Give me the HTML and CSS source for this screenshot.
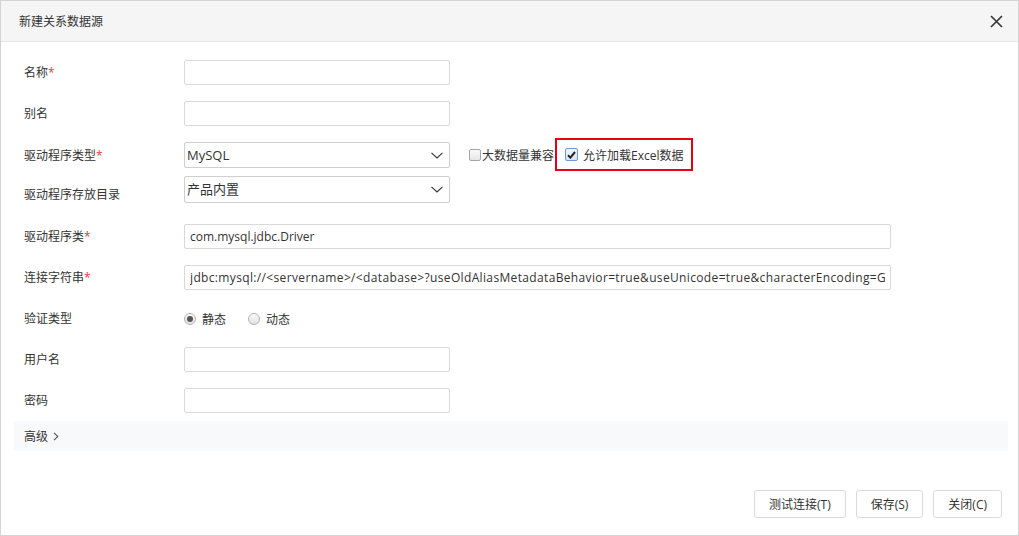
FILE: index.html
```html
<!DOCTYPE html>
<html>
  <head>
    <title>新建关系数据源</title>
    <link rel="stylesheet" href="styles.css">
  </head>
  <body>
    <div class="dialog">
      <div class="dialog-header">
        <span class="dialog-title">新建关系数据源</span>
        <svg class="close-icon" width="13" height="13" viewBox="0 0 13 13">
          <path d="M1 1L12 12M12 1L1 12" stroke="#333" stroke-width="1.6" fill="none" />
        </svg>
      </div>

      <div class="dialog-body">
        <div class="row">
          <label class="label">名称<span class="req">*</span></label>
          <input class="text-input short" type="text">
        </div>

        <div class="row">
          <label class="label">别名</label>
          <input class="text-input short" type="text">
        </div>

        <div class="row tight">
          <label class="label">驱动程序类型<span class="req">*</span></label>
          <div class="select">
            <span>MySQL</span>
            <svg class="chevron" width="12" height="7" viewBox="0 0 12 7">
              <path d="M0.5 0.8L6 6L11.5 0.8" stroke="#333" stroke-width="1.1" fill="none" />
            </svg>
          </div>
          <label class="check-option">
            <span class="checkbox"></span>大数据量兼容
          </label>
          <label class="check-option highlight">
            <span class="checkbox checked">
              <svg width="9" height="8" viewBox="0 0 9 8">
                <path d="M1 4.2L3.4 6.6L8 1" stroke="#222" stroke-width="2" fill="none" />
              </svg>
            </span>
            允许加载Excel数据
          </label>
        </div>

        <div class="row wide-gap">
          <label class="label low">驱动程序存放目录</label>
          <div class="select tall">
            <span class="select-cn">产品内置</span>
            <svg class="chevron" width="12" height="7" viewBox="0 0 12 7">
              <path d="M0.5 0.8L6 6L11.5 0.8" stroke="#333" stroke-width="1.1" fill="none" />
            </svg>
          </div>
        </div>

        <div class="row">
          <label class="label">驱动程序类<span class="req">*</span></label>
          <input class="text-input long" type="text" value="com.mysql.jdbc.Driver">
        </div>

        <div class="row">
          <label class="label">连接字符串<span class="req">*</span></label>
          <input class="text-input long conn" type="text"
            value="jdbc:mysql://<servername>/<database>?useOldAliasMetadataBehavior=true&useUnicode=true&characterEncoding=GBK">
        </div>

        <div class="row">
          <label class="label">验证类型</label>
          <div class="radio-group">
            <label class="radio-option"><span class="radio on"></span>静态</label>
            <label class="radio-option"><span class="radio"></span>动态</label>
          </div>
        </div>

        <div class="row">
          <label class="label">用户名</label>
          <input class="text-input short" type="text">
        </div>

        <div class="row last">
          <label class="label">密码</label>
          <input class="text-input short" type="password">
        </div>

        <div class="advanced-bar">
          高级
          <svg width="6" height="9" viewBox="0 0 6 9">
            <path d="M1 0.8L4.8 4.5L1 8.2" stroke="#555" stroke-width="1.1" fill="none" />
          </svg>
        </div>
      </div>

      <div class="dialog-footer">
        <button class="btn">测试连接(T)</button>
        <button class="btn">保存(S)</button>
        <button class="btn">关闭(C)</button>
      </div>
    </div>
  </body>
</html>
```

FILE: styles.css
```css
:root {
  --border-color: #d9d9d9;
  --text-color: #333;
  --header-bg: #f5f5f5;
  --bar-bg: #f8f9fb;
}

* {
  box-sizing: border-box;
}

body {
  margin: 0;
  font-family: "Open Sans", "Noto Sans CJK SC", sans-serif;
  font-size: 12px;
  color: var(--text-color);
  background: white;
}

.dialog {
  width: 1019px;
  height: 536px;
  border: 1px solid #d4d4d4;
  display: flex;
  flex-direction: column;
  background: white;
}

.dialog-header {
  height: 41px;
  background: var(--header-bg);
  border-bottom: 1px solid #e6e6e6;
  display: flex;
  align-items: center;
  justify-content: space-between;
  padding: 0 15px 0 18px;
}

.dialog-title {
  font-size: 12px;
}

.dialog-body {
  padding: 18px 10px 0 13px;
}

.row {
  display: flex;
  align-items: center;
  min-height: 25px;
  margin-bottom: 16px;
  padding-left: 10px;
}

.row.tight {
  margin-bottom: 8px;
}

.row.wide-gap {
  margin-bottom: 21px;
}

.row.last {
  margin-bottom: 8px;
}

.label {
  width: 160px;
  flex-shrink: 0;
  line-height: 17px;
}

.label.low {
  align-self: flex-end;
}

.req {
  color: #e53935;
}

.text-input {
  height: 25px;
  border: 1px solid var(--border-color);
  border-radius: 2px;
  padding: 0 5px;
  font-family: inherit;
  font-size: 12px;
  color: var(--text-color);
  outline: none;
}

.text-input.short {
  width: 266px;
}

.text-input.long {
  width: 707px;
}

.text-input.conn {
  letter-spacing: 0.35px;
}

.select {
  width: 266px;
  height: 26px;
  border: 1px solid #cfcfcf;
  border-radius: 2px;
  display: flex;
  align-items: center;
  justify-content: space-between;
  padding: 0 6px 0 2px;
  font-size: 13px;
}

.select.tall {
  height: 27px;
}

.select-cn {
  margin-top: -3px;
}

.check-option {
  display: flex;
  align-items: center;
  margin-left: 19px;
}

.check-option.highlight {
  margin: -4px 0 -3px 1px;
  border: 2px solid #e60012;
  height: 33px;
  padding: 0 8px 0 8px;
}

.checkbox {
  width: 12px;
  height: 12px;
  border: 1px solid #a6a6a6;
  border-radius: 2px;
  background: linear-gradient(#fafafa, #e6e6e6);
  display: inline-flex;
  align-items: center;
  justify-content: center;
  margin-right: 1px;
}

.checkbox.checked {
  width: 13px;
  height: 13px;
  border-color: #6d9ad8;
  background: linear-gradient(#f0f5fc, #d8e4f4);
  margin-right: 5px;
}

.radio-group {
  display: flex;
  gap: 22px;
}

.radio-option {
  display: flex;
  align-items: center;
  gap: 6px;
}

.radio {
  width: 12px;
  height: 12px;
  border-radius: 50%;
  border: 1px solid #b3b3b3;
  background: linear-gradient(#fafafa, #e2e2e2);
  display: inline-flex;
  align-items: center;
  justify-content: center;
}

.radio.on::after {
  content: "";
  width: 6px;
  height: 6px;
  border-radius: 50%;
  background: #555;
}

.advanced-bar {
  height: 30px;
  background: var(--bar-bg);
  display: flex;
  align-items: center;
  gap: 5px;
  padding-left: 10px;
}

.dialog-footer {
  margin-top: auto;
  display: flex;
  justify-content: flex-end;
  gap: 10px;
  padding: 0 16px 17px 0;
}

.btn {
  height: 28px;
  padding: 0 14px;
  border: 1px solid #d9d9d9;
  border-radius: 3px;
  background: white;
  font-family: inherit;
  font-size: 12px;
  color: var(--text-color);
}
```
